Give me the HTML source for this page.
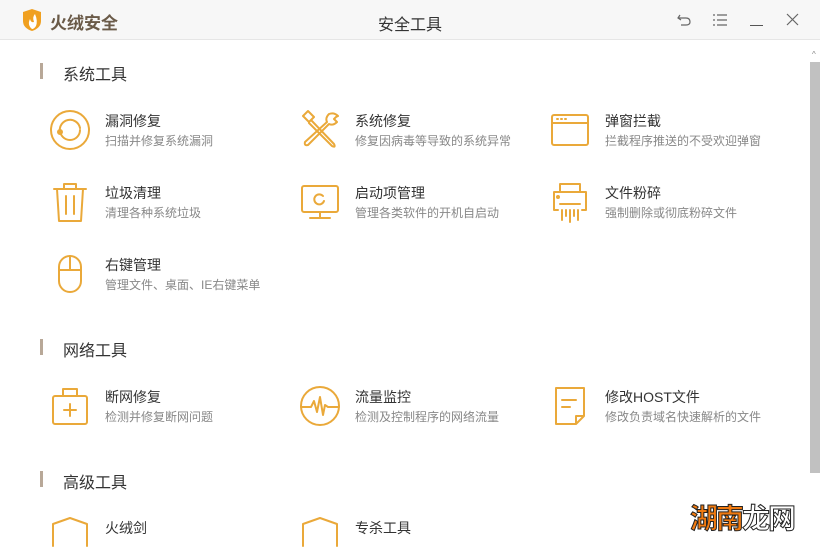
<!DOCTYPE html>
<html><head><meta charset="utf-8"><style>
*{margin:0;padding:0;box-sizing:border-box}
body{width:820px;height:540px;overflow:hidden;background:#fff;font-family:"Liberation Sans","Noto Sans CJK SC",sans-serif;position:relative}
.hdr{position:absolute;left:0;top:0;width:820px;height:40px;background:#f7f7f7;border-bottom:1px solid #e6e6e6}
.a{position:absolute}
.sec{position:absolute;left:40px;font-size:16px;color:#333}
.sec:before{content:"";position:absolute;left:0;top:2px;width:3px;height:16px;background:#b8a898}
.sec span{margin-left:23px}
.t{position:absolute;font-size:14px;color:#333;line-height:16px}
.d{position:absolute;font-size:12px;color:#888;line-height:14px}
svg.i{position:absolute;width:44px;height:44px;fill:none;stroke:#eaa93a;stroke-width:2;stroke-linecap:round;stroke-linejoin:round}
</style></head><body>
<div class="hdr"></div>
<svg class="a" style="left:22px;top:9px" width="20" height="22" viewBox="0 0 20 22"><path d="M1 3 L10 0 L19 3 L19 12 Q19 19 10 22 Q1 19 1 12Z" fill="#f0a020"/><path d="M10 20 Q5 16 8 10 Q9 14 12 13 Q10 8 13 5 Q16 12 14 17 Q12 20 10 20Z" fill="#fff"/></svg>
<div class="a" style="left:50px;top:9px;font-size:17px;font-weight:bold;color:#6a5a48">火绒安全</div>
<div class="a" style="left:378px;top:11px;font-size:16px;color:#333">安全工具</div>
<svg class="a" style="left:676px;top:12px" width="16" height="16" viewBox="0 0 16 16" fill="none" stroke="#666" stroke-width="1.2"><path d="M4 3 L2 6 L5 8 M2 6 H10 Q14 6 14 10 Q14 13 10 13 H5"/></svg>
<svg class="a" style="left:712px;top:13px" width="16" height="14" viewBox="0 0 16 14" stroke="#666" stroke-width="1.2"><path d="M1 2h2M5 2h10M1 7h2M5 7h10M1 12h2M5 12h10"/></svg>
<div class="a" style="left:750px;top:25px;width:13px;height:1.3px;background:#555"></div>
<svg class="a" style="left:786px;top:13px" width="13" height="13" viewBox="0 0 13 13" stroke="#666" stroke-width="1.2"><path d="M1 1L12 12M12 1L1 12"/></svg>
<div class="a" style="left:810px;top:62px;width:10px;height:411px;background:#c1c1c1"></div>
<div class="a" style="left:812px;top:50px;font-size:8px;color:#888">^</div>

<div class="sec" style="top:61px"><span>系统工具</span></div>
<div class="sec" style="top:337px"><span>网络工具</span></div>
<div class="sec" style="top:469px"><span>高级工具</span></div>

<svg class="i" style="left:48px;top:108px" viewBox="0 0 44 44"><circle cx="22" cy="22" r="19"/><path d="M12 24 A10 10 0 0 1 32 20 M32 22 A10 10 0 0 1 12 22"/><circle cx="12" cy="24" r="2" fill="#eaa93a"/></svg>
<div class="t" style="left:105px;top:113px">漏洞修复</div><div class="d" style="left:105px;top:134px">扫描并修复系统漏洞</div>
<svg class="i" style="left:298px;top:108px" viewBox="0 0 44 44"><path d="M5 8 L10 3 L16 9 L11 14Z M13 12 L36 36 Q38 40 34 38 L11 15"/><path d="M40 8 Q36 4 31 6 Q27 10 29 14 L7 34 Q6 38 10 37 L31 16 Q35 18 39 14 L36 11 L38 9Z"/></svg>
<div class="t" style="left:355px;top:113px">系统修复</div><div class="d" style="left:355px;top:134px">修复因病毒等导致的系统异常</div>
<svg class="i" style="left:548px;top:108px" viewBox="0 0 44 44"><rect x="4" y="7" width="36" height="30" rx="2"/><path d="M4 15H40"/><path d="M9 11h1M13 11h1M17 11h1"/></svg>
<div class="t" style="left:605px;top:113px">弹窗拦截</div><div class="d" style="left:605px;top:134px">拦截程序推送的不受欢迎弹窗</div>
<svg class="i" style="left:48px;top:180px" viewBox="0 0 44 44"><path d="M6 9H38M16 9V4H28V9M9 9L11 41H33L35 9M18 16V34M26 16V34"/></svg>
<div class="t" style="left:105px;top:185px">垃圾清理</div><div class="d" style="left:105px;top:206px">清理各种系统垃圾</div>
<svg class="i" style="left:298px;top:180px" viewBox="0 0 44 44"><rect x="4" y="6" width="36" height="26" rx="2"/><path d="M22 32V38M12 38H32"/><path d="M25 16 A5 5 0 1 0 26 21"/></svg>
<div class="t" style="left:355px;top:185px">启动项管理</div><div class="d" style="left:355px;top:206px">管理各类软件的开机自启动</div>
<svg class="i" style="left:548px;top:180px" viewBox="0 0 44 44"><path d="M12 12V4H32V12M6 30V12H38V30H34M6 30H10M12 24H32M14 30V40M18 30V36M22 30V42M26 30V36M30 30V40"/><circle cx="10" cy="17" r="1" fill="#eaa93a"/></svg>
<div class="t" style="left:605px;top:185px">文件粉碎</div><div class="d" style="left:605px;top:206px">强制删除或彻底粉碎文件</div>
<svg class="i" style="left:48px;top:252px" viewBox="0 0 44 44"><rect x="11" y="4" width="22" height="36" rx="11"/><path d="M11 18H33M22 4V18M22 10V13"/></svg>
<div class="t" style="left:105px;top:257px">右键管理</div><div class="d" style="left:105px;top:278px">管理文件、桌面、IE右键菜单</div>
<svg class="i" style="left:48px;top:384px" viewBox="0 0 44 44"><rect x="5" y="12" width="34" height="28" rx="2"/><path d="M15 12V5H29V12M22 20V32M16 26H28"/></svg>
<div class="t" style="left:105px;top:389px">断网修复</div><div class="d" style="left:105px;top:410px">检测并修复断网问题</div>
<svg class="i" style="left:298px;top:384px" viewBox="0 0 44 44"><circle cx="22" cy="22" r="19"/><path d="M3 23H13L16 17L19 28L22 13L25 31L27 21L30 23H41"/></svg>
<div class="t" style="left:355px;top:389px">流量监控</div><div class="d" style="left:355px;top:410px">检测及控制程序的网络流量</div>
<svg class="i" style="left:548px;top:384px" viewBox="0 0 44 44"><path d="M8 4H36V32L28 40H8Z M28 40V32H36M14 16H28M14 23H22"/></svg>
<div class="t" style="left:605px;top:389px">修改HOST文件</div><div class="d" style="left:605px;top:410px">修改负责域名快速解析的文件</div>
<svg class="i" style="left:48px;top:516px" viewBox="0 0 44 44"><path d="M5 30V8 L22 2 L39 8V30"/></svg>
<div class="t" style="left:105px;top:520px">火绒剑</div>
<svg class="i" style="left:298px;top:516px" viewBox="0 0 44 44"><path d="M5 30V8 L22 2 L39 8V30"/></svg>
<div class="t" style="left:355px;top:520px">专杀工具</div>
<div class="a" style="left:690px;top:497px;font-size:28px;font-weight:bold;color:#f07a10;-webkit-text-stroke:1px #222;letter-spacing:-2px">湖南<span style="color:#fff">龙网</span></div>
</body></html>
